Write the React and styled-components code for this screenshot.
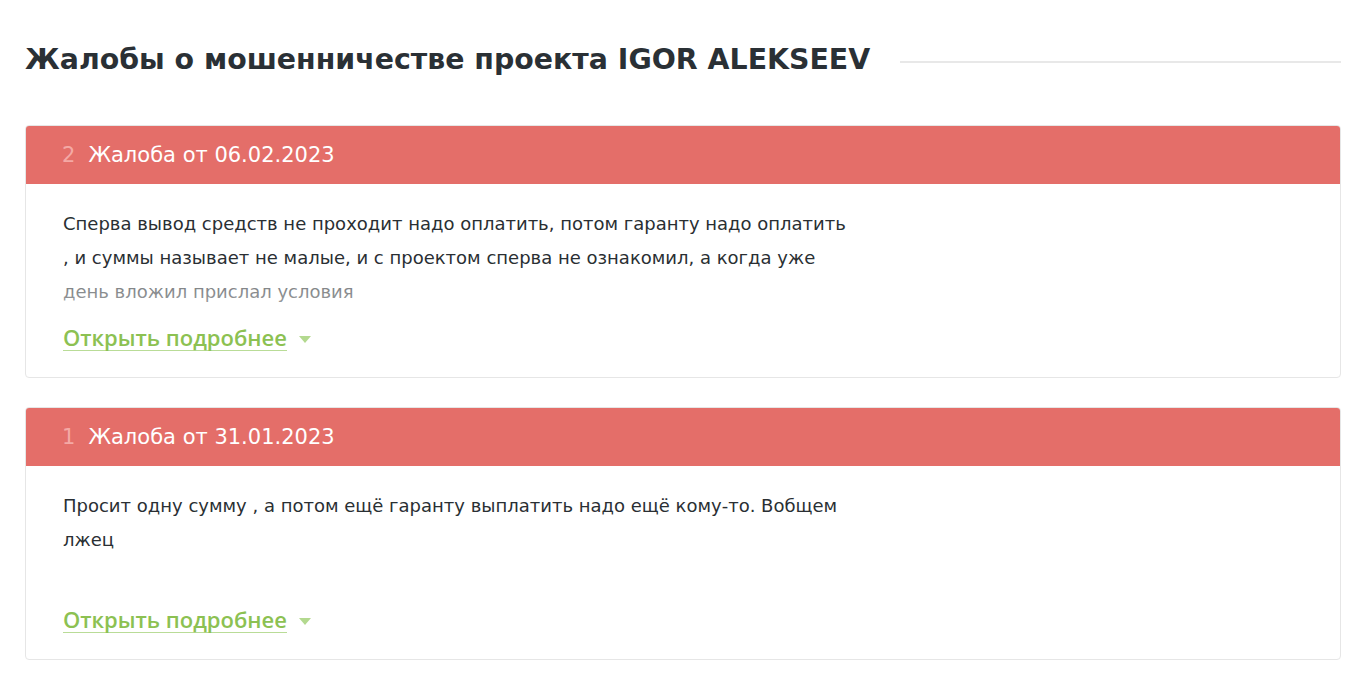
import React from 'react';
import styled, { createGlobalStyle } from 'styled-components';

const GlobalStyle = createGlobalStyle`
  body {
    margin: 0;
    background: #fff;
    font-family: "DejaVu Sans", "Open Sans", sans-serif;
    color: #2a2f33;
  }
`;

const complaints = [
  {
    num: 2,
    date: '06.02.2023',
    text: 'Сперва вывод средств не проходит надо оплатить, потом гаранту надо оплатить , и суммы называет не малые, и с проектом сперва не ознакомил, а когда уже день вложил прислал условия',
    fade: true
  },
  {
    num: 1,
    date: '31.01.2023',
    text: 'Просит одну сумму , а потом ещё гаранту выплатить надо ещё кому-то. Вобщем лжец',
    fade: false
  }
];

function App() {
  return (
    <>
      <GlobalStyle />
      <Page>
        <TitleRow>
          <Title>Жалобы о мошенничестве проекта IGOR ALEKSEEV</Title>
          <TitleLine />
        </TitleRow>
        <List>
          {complaints.map((item) => (
            <Card key={item.num}>
              <CardHead>
                <Num>{item.num}</Num>
                <HeadText>Жалоба от {item.date}</HeadText>
              </CardHead>
              <CardBody>
                <BodyText $fade={item.fade}>{item.text}</BodyText>
                <More>
                  <MoreLink href="#">Открыть подробнее</MoreLink>
                  <Caret />
                </More>
              </CardBody>
            </Card>
          ))}
        </List>
      </Page>
    </>
  );
}

export default App;

const Page = styled.div`
  padding: 39px 31px 24px 25px;
`;

const TitleRow = styled.div`
  display: flex;
  align-items: center;
  gap: 30px;
`;

const Title = styled.h1`
  margin: 0;
  font-size: 28.4px;
  font-weight: 700;
  line-height: 42px;
  color: #2a3035;
  white-space: nowrap;
`;

const TitleLine = styled.div`
  flex: 1;
  height: 2px;
  background: #e8e8e8;
  margin-top: 4px;
`;

const List = styled.div`
  display: flex;
  flex-direction: column;
  gap: 29px;
  margin-top: 44px;
`;

const Card = styled.div`
  border: 1px solid #e6e6e6;
  border-radius: 4px;
  overflow: hidden;
  background: #fff;
`;

const CardHead = styled.div`
  background: #e46e69;
  height: 58px;
  display: flex;
  align-items: center;
  padding-left: 36px;
  gap: 13px;
  font-size: 21px;
`;

const Num = styled.span`
  color: #f4a9a5;
`;

const HeadText = styled.span`
  color: #fff;
`;

const CardBody = styled.div`
  padding: 23px 38px 26px 37px;
`;

const BodyText = styled.div`
  position: relative;
  max-width: 785px;
  height: 102px;
  overflow: hidden;
  font-size: 18px;
  line-height: 34px;
  color: #2a2f33;

  &::after {
    content: '';
    display: ${(p) => (p.$fade ? 'block' : 'none')};
    position: absolute;
    left: 0;
    right: 0;
    bottom: 0;
    height: 40px;
    background: linear-gradient(rgba(255, 255, 255, 0.3), rgba(255, 255, 255, 0.55));
  }
`;

const More = styled.div`
  display: flex;
  align-items: center;
  gap: 12px;
  margin-top: 16px;
`;

const MoreLink = styled.a`
  font-family: "Open Sans", sans-serif;
  font-size: 22px;
  font-weight: 600;
  line-height: 25px;
  color: #8cc152;
  text-decoration: none;
  border-bottom: 1px solid #b9dc97;
`;

const Caret = styled.span`
  width: 0;
  height: 0;
  border-left: 6px solid transparent;
  border-right: 6px solid transparent;
  border-top: 7px solid #b3d98f;
  margin-top: 3px;
`;
